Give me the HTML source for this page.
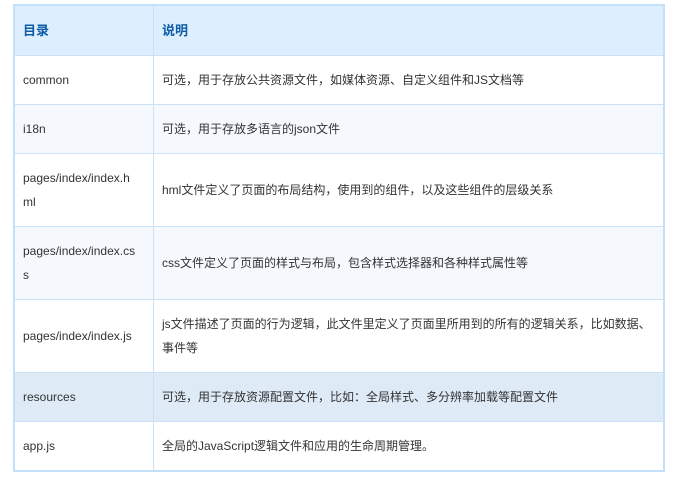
<!DOCTYPE html><html><head><meta charset="utf-8"><style>
body{margin:0;background:#fff;font-family:"Liberation Sans","Noto Sans CJK SC",sans-serif;font-size:12px;color:#333}
table{position:absolute;left:13px;top:4px;width:652px;border-collapse:collapse;border:2px solid #c3e0fa}
td,th{border:1px solid #c9e2f7;padding:0 0 0 8px;text-align:left;vertical-align:middle;line-height:24px}
th{background:#ddeffe;color:#0e5ca6;font-weight:bold;font-size:13px;height:49px}
td:first-child,th:first-child{width:130px}
tr.a td{background:#f5f9fe}
tr.r td{background:#deebf7}
</style></head><body>
<table>
<tr><th>目录</th><th>说明</th></tr>
<tr style="height:49px"><td>common</td><td>可选，用于存放公共资源文件，如媒体资源、自定义组件和JS文档等</td></tr>
<tr class="a" style="height:49px"><td>i18n</td><td>可选，用于存放多语言的json文件</td></tr>
<tr style="height:73px"><td>pages/index/index.h<br>ml</td><td>hml文件定义了页面的布局结构，使用到的组件，以及这些组件的层级关系</td></tr>
<tr class="a" style="height:73px"><td>pages/index/index.cs<br>s</td><td>css文件定义了页面的样式与布局，包含样式选择器和各种样式属性等</td></tr>
<tr style="height:73px"><td>pages/index/index.js</td><td>js文件描述了页面的行为逻辑，此文件里定义了页面里所用到的所有的逻辑关系，比如数据、<br>事件等</td></tr>
<tr class="r" style="height:49px"><td>resources</td><td>可选，用于存放资源配置文件，比如：全局样式、多分辨率加载等配置文件</td></tr>
<tr style="height:49px"><td>app.js</td><td>全局的JavaScript逻辑文件和应用的生命周期管理。</td></tr>
</table></body></html>
